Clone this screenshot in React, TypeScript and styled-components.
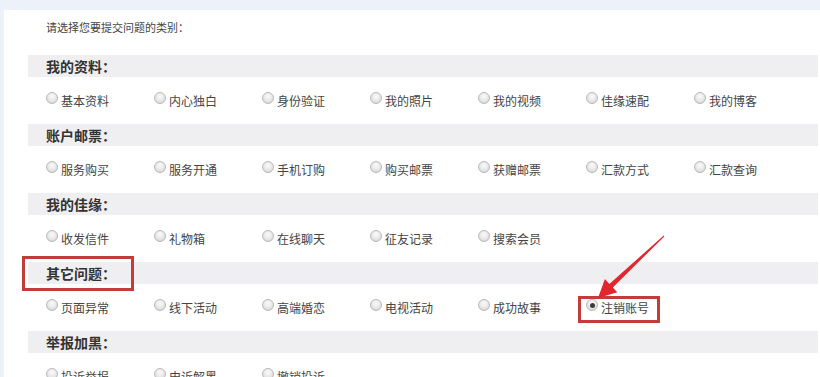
import styled, { createGlobalStyle } from 'styled-components'

interface Section {
  title: string
  items: string[]
}

const sections: Section[] = [
  { title: '我的资料：', items: ['基本资料', '内心独白', '身份验证', '我的照片', '我的视频', '佳缘速配', '我的博客'] },
  { title: '账户邮票：', items: ['服务购买', '服务开通', '手机订购', '购买邮票', '获赠邮票', '汇款方式', '汇款查询'] },
  { title: '我的佳缘：', items: ['收发信件', '礼物箱', '在线聊天', '征友记录', '搜索会员'] },
  { title: '其它问题：', items: ['页面异常', '线下活动', '高端婚恋', '电视活动', '成功故事', '注销账号'] },
  { title: '举报加黑：', items: ['投诉举报', '申诉解黑', '撤销投诉'] },
]

const HIGHLIGHT_TITLE = '其它问题：'
const SELECTED_ITEM = '注销账号'

const GlobalStyle = createGlobalStyle`
  html, body {
    margin: 0;
    padding: 0;
    background: #ffffff;
    overflow: hidden;
  }
  body {
    font-family: "Noto Sans CJK SC", "Noto Sans", sans-serif;
  }
`

function App() {
  return (
    <Page>
      <GlobalStyle />
      <Panel>
        <Intro>请选择您要提交问题的类别：</Intro>
        {sections.map((section) => (
          <div key={section.title}>
            <TitleBar>
              {section.title}
              {section.title === HIGHLIGHT_TITLE && <TitleMark />}
            </TitleBar>
            <ItemRow>
              {section.items.map((item) => {
                const checked = item === SELECTED_ITEM
                return (
                  <Item key={item}>
                    <Radio $checked={checked} />
                    <Label>{item}</Label>
                    {checked && <ItemMark />}
                  </Item>
                )
              })}
            </ItemRow>
          </div>
        ))}
      </Panel>
      <Arrow viewBox="580 228 90 75">
        <polygon
          fill="#e3262e"
          points="664.3,236.4 612.8,287.5 617.3,292.3 598,298 604.9,279.1 609.4,283.9 663.7,235.6"
        />
      </Arrow>
    </Page>
  )
}

const Page = styled.div`
  position: relative;
  width: 820px;
  height: 377px;
  box-sizing: border-box;
  padding: 10px 0 0 4px;
  background: #edf1f9;
  overflow: hidden;
`

const Panel = styled.div`
  background: #ffffff;
  height: 100%;
  padding: 0 2px 0 24px;
`

const Intro = styled.div`
  height: 45px;
  line-height: 34px;
  padding-left: 18px;
  font-size: 11px;
  color: #444;
`

const TitleBar = styled.div`
  position: relative;
  height: 22px;
  line-height: 22px;
  padding-left: 18px;
  background: #efeef0;
  font-size: 14px;
  font-weight: 700;
  color: #333;
`

const TitleMark = styled.span`
  position: absolute;
  left: -6px;
  top: -6px;
  width: 106px;
  height: 29px;
  border: 3px solid #c23d38;
`

const ItemRow = styled.div`
  display: grid;
  grid-template-columns: repeat(7, 108px);
  align-items: center;
  height: 47px;
  padding-left: 18px;
`

const Item = styled.div`
  position: relative;
  display: flex;
  align-items: center;
  height: 16px;
`

const Radio = styled.span<{ $checked: boolean }>`
  position: relative;
  box-sizing: border-box;
  width: 12px;
  height: 12px;
  margin: 0 3px 5px 0;
  border-radius: 50%;
  border: 1px solid #b9b9b9;
  background: radial-gradient(circle at 50% 35%, #fbfbfb 0%, #e6e6e6 55%, #cfcfcf 100%);
  &::after {
    content: '';
    display: ${(p) => (p.$checked ? 'block' : 'none')};
    position: absolute;
    left: 2.5px;
    top: 2.5px;
    width: 5px;
    height: 5px;
    border-radius: 50%;
    background: #3a3a3a;
  }
`

const Label = styled.span`
  font-size: 12px;
  color: #444;
  white-space: nowrap;
`

const ItemMark = styled.span`
  position: absolute;
  left: -8px;
  top: -4px;
  width: 76px;
  height: 21px;
  border: 3px solid #c23d38;
`

const Arrow = styled.svg`
  position: absolute;
  left: 580px;
  top: 228px;
  width: 90px;
  height: 75px;
`

export default App
